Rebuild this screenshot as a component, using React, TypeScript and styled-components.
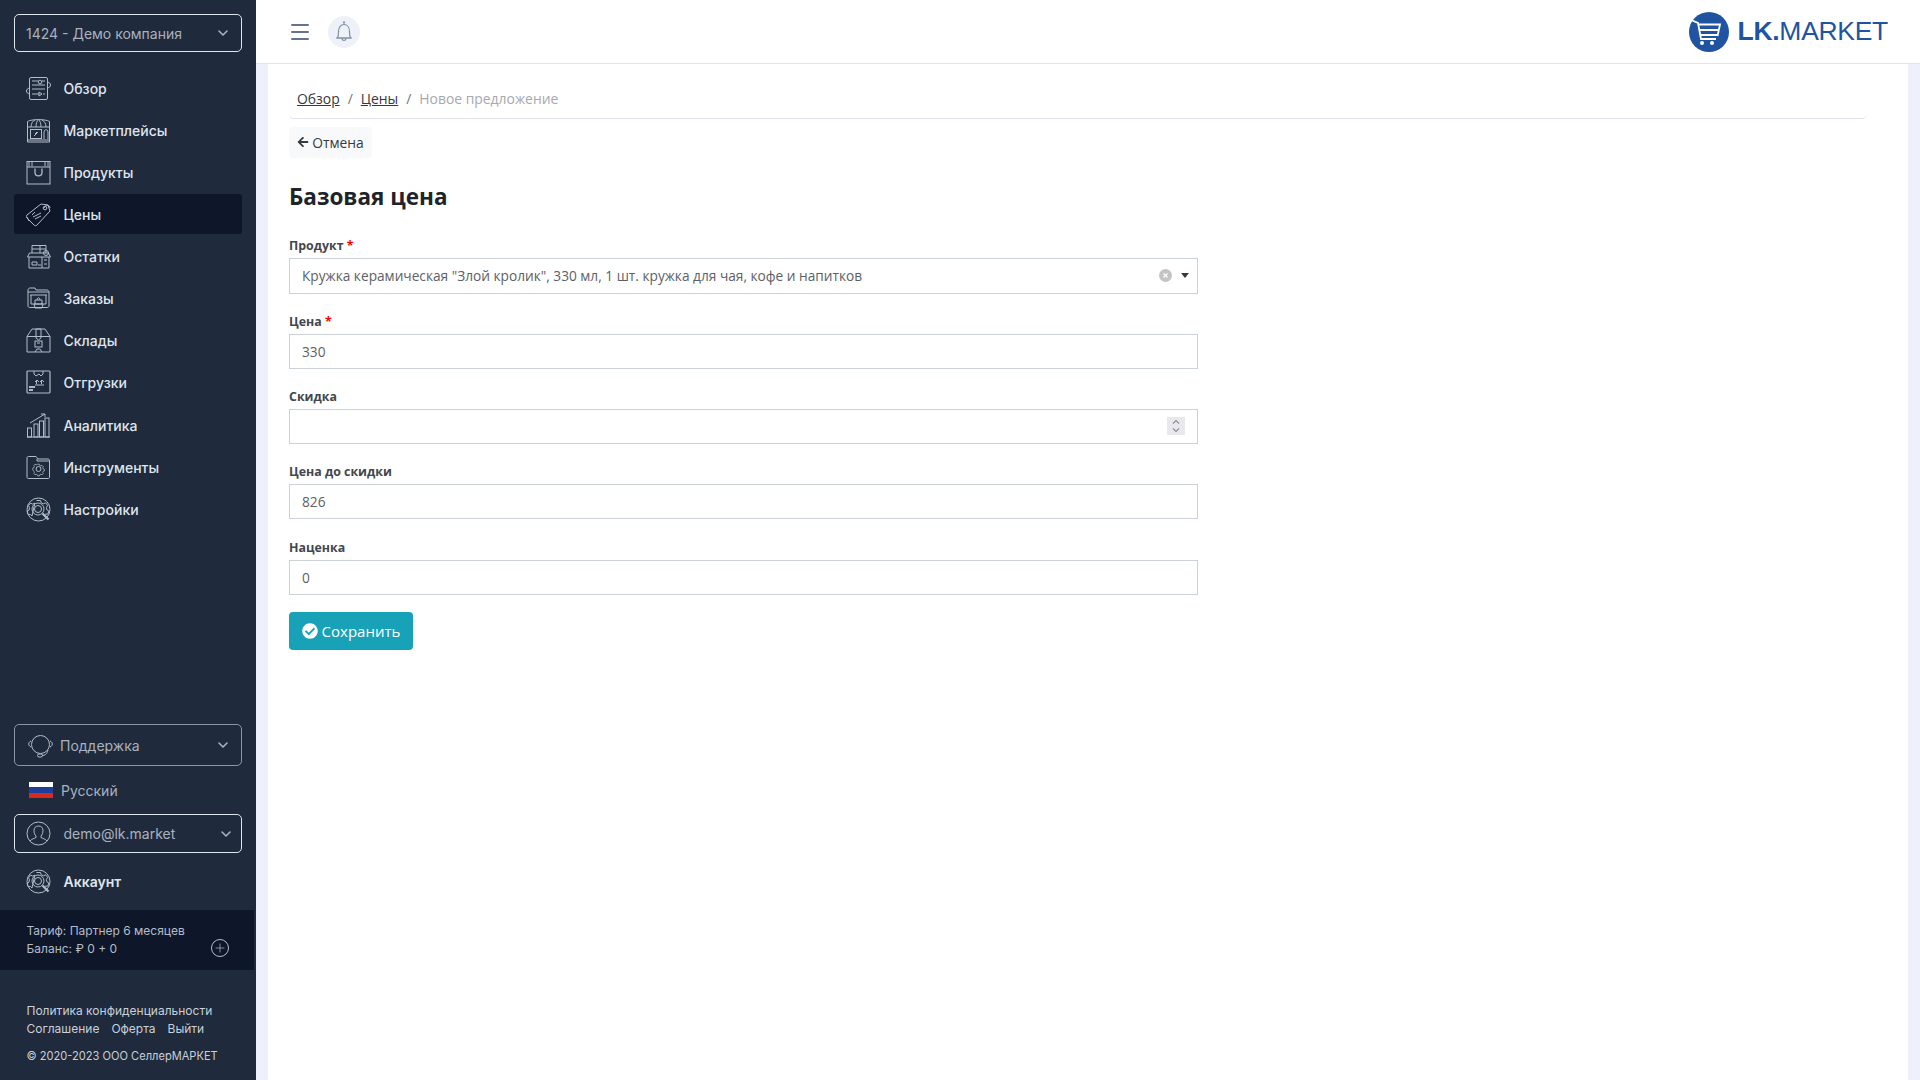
import React from 'react';
import styled, { createGlobalStyle } from 'styled-components';
import { ChevronDown, Menu, Plus } from 'lucide-react';
import { FaCheckCircle, FaArrowLeft } from 'react-icons/fa';

const GlobalStyle = createGlobalStyle`
  html, body { margin: 0; padding: 0; background: #eef1fb; }
  * { box-sizing: border-box; }
`;

const Page = styled.div`
  display: flex;
  width: 1920px;
  height: 1080px;
  overflow: hidden;
  font-family: "Open Sans", "Noto Sans", sans-serif;
`;

// левая колонка
const Sidebar = styled.aside`
  width: 256px;
  flex-shrink: 0;
  display: flex;
  flex-direction: column;
  background: #1f2a3c;
  font-family: Inter, "Liberation Sans", sans-serif;
`;

const SideTop = styled.div`
  padding: 14px 14px 0;
`;

const SideBottom = styled.div`
  margin-top: auto;
`;

const SidePad = styled.div`
  padding: 0 14px;
`;

const DropBox = styled.div<{ $h: number; $dim?: boolean; $pl: number; $pr?: number }>`
  height: ${(p) => p.$h}px;
  display: flex;
  align-items: center;
  padding: 0 ${(p) => p.$pr ?? 10}px 0 ${(p) => p.$pl}px;
  border: 1px solid ${(p) => (p.$dim ? '#8b95a7' : '#dfe5ee')};
  border-radius: 5px;
  color: #a9b2bf;
  font-size: 14px;
  svg.chev { margin-left: auto; color: #a9b2bf; }
`;

const NavList = styled.nav`
  margin-top: 16px;
  display: flex;
  flex-direction: column;
  gap: 2.15px;
`;

const NavItem = styled.a<{ $active?: boolean }>`
  height: 40px;
  display: flex;
  align-items: center;
  gap: 12.5px;
  padding-left: 12px;
  border-radius: 3px;
  background: ${(p) => (p.$active ? '#0e1729' : 'transparent')};
  color: #dfe5ee;
  font-size: 14px;
  font-weight: 500;
`;

const IconSvg = styled.svg`
  width: 25px;
  height: 25px;
  flex-shrink: 0;
  fill: none;
  stroke: #b4bcc9;
  stroke-width: 1;
`;

const DropIcon = styled(IconSvg)<{ $mr: number }>`
  margin-right: ${(p) => p.$mr}px;
`;

const LangRow = styled.div`
  height: 34px;
  margin: 7px 0;
  display: flex;
  align-items: center;
  gap: 8px;
  padding-left: 15px;
  color: #a9b2bf;
  font-size: 14px;
`;

const Flag = styled.span`
  width: 24px;
  height: 16px;
  background: linear-gradient(#fff 0 33%, #1d3f9a 33% 66%, #d52b1e 66%);
`;

const AccountItem = styled(NavItem)`
  margin-top: 8px;
  font-weight: 600;
`;

const TariffBand = styled.div`
  height: 60px;
  width: 254px;
  margin-top: 9px;
  padding: 12px 25px 0 26.5px;
  display: flex;
  justify-content: space-between;
  align-items: flex-start;
  background: #0e1729;
  color: #b4bcc9;
  font-size: 12px;
  line-height: 18px;
`;

const PlusCircle = styled.span`
  width: 18px;
  height: 18px;
  margin-top: 17px;
  display: flex;
  align-items: center;
  justify-content: center;
  border: 1px solid #b4bcc9;
  border-radius: 50%;
`;

const SideFooter = styled.div`
  padding: 32px 0 15px 26.5px;
  color: #c9d0da;
  font-size: 12px;
  line-height: 18px;
`;

const FooterLinks = styled.div`
  display: flex;
  gap: 12px;
`;

const Copyright = styled.div`
  margin-top: 9px;
  font-size: 11.1px;
`;

// правая часть
const MainColumn = styled.div`
  flex: 1;
  display: flex;
  flex-direction: column;
  min-width: 0;
`;

const TopBar = styled.header`
  height: 64px;
  flex-shrink: 0;
  display: flex;
  align-items: center;
  padding: 0 32px;
  background: #fff;
  border-bottom: 1px solid #e2e6f0;
`;

const BurgerBtn = styled.span`
  display: flex;
  color: #64748b;
`;

const BellCircle = styled.span`
  width: 32px;
  height: 32px;
  margin-left: 16px;
  display: flex;
  align-items: center;
  justify-content: center;
  border-radius: 50%;
  background: #eef2f8;
`;

const Logo = styled.div`
  margin-left: auto;
  display: flex;
  align-items: center;
  gap: 9px;
  color: #2154a0;
  font-family: "Liberation Sans", Arial, sans-serif;
  font-size: 26.5px;
  letter-spacing: -0.3px;
  b { font-weight: 700; }
`;

const ContentArea = styled.div`
  flex: 1;
  padding: 0 12px;
  background: #eef1fb;
`;

const Panel = styled.main`
  height: 100%;
  padding: 16px 41px 0 21px;
  background: #fff;
`;

const Breadcrumbs = styled.div`
  height: 39px;
  display: flex;
  align-items: flex-start;
  padding: 9px 0 0 8px;
  border-bottom: 1px solid #dfe2ea;
  border-radius: 0 0 5px 5px;
  font-size: 13.9px;
  line-height: 19px;
  color: #343a40;
`;

const Crumb = styled.a`
  text-decoration: underline;
`;

const CrumbSep = styled.span`
  padding: 0 8px;
  color: #6c757d;
`;

const CrumbCurrent = styled.span`
  color: #a6a9ad;
`;

const CancelBtn = styled.button`
  height: 31px;
  width: 83px;
  margin-top: 8px;
  padding: 0 0 1px;
  display: flex;
  align-items: center;
  justify-content: center;
  gap: 3px;
  border: 0;
  border-radius: 4px;
  background: #f8f9fa;
  color: #343a40;
  font: inherit;
  font-size: 13.8px;
`;

const Title = styled.h1`
  margin: 21.5px 0 23px;
  font-size: 22.5px;
  line-height: 33px;
  font-weight: 700;
  color: #20242a;
`;

const Form = styled.form`
  width: 909px;
`;

const Group = styled.div`
  margin-bottom: 18.33px;
`;

const Label = styled.label`
  display: block;
  margin-bottom: 2px;
  font-size: 12.4px;
  line-height: 20px;
  font-weight: 700;
  color: #43474d;
  i { font-style: normal; color: #f00; }
`;

const fieldCss = `
  width: 100%;
  height: 35px;
  border: 1px solid #ccd1d9;
  background: #fff;
  color: #5c6167;
  font-family: inherit;
  font-size: 13.7px;
  padding: 0 12px;
  outline: none;
`;

const Input = styled.input`
  ${fieldCss}
`;

const NumberWrap = styled.div`
  position: relative;
`;

const Stepper = styled.span`
  position: absolute;
  top: 8px;
  right: 13px;
  width: 18px;
  height: 18px;
  background: #e9e9ed;
`;

const SelectBox = styled.div`
  ${fieldCss}
  height: 36px;
  display: flex;
  align-items: center;
`;

const SelectValue = styled.span`
  flex: 1;
  white-space: nowrap;
`;

const ClearIcon = styled.span`
  width: 13px;
  height: 13px;
  margin-right: 9px;
  display: flex;
  border-radius: 50%;
  background: #c4c4c4;
`;

const Caret = styled.span`
  width: 0;
  height: 0;
  margin-right: -4px;
  border-left: 4px solid transparent;
  border-right: 4px solid transparent;
  border-top: 5px solid #343a40;
`;

const SaveBtn = styled.button`
  height: 38px;
  width: 124px;
  margin-top: -1.5px;
  padding: 0;
  display: flex;
  align-items: center;
  justify-content: center;
  gap: 4px;
  border: 0;
  border-radius: 4px;
  background: #17a2b8;
  color: #fff;
  font: inherit;
  font-size: 15px;
`;

const icons: Record<string, React.ReactNode> = {
  overview: (
    <>
      <rect x="3.5" y="1.5" width="18" height="22" rx="1.5" />
      <path d="M6 5h6M16 5h3M6 9h13M6 13h13M6 18h7M17 18h2" />
      <circle cx="14" cy="6" r="1.8" />
      <path d="M13 16l3 2-3 2z" />
      <path d="M3.5 12c-2 .5-3 1.5-3 3s1 2.5 3 3M21.5 6c2 .5 3 1.5 3 3s-1 2.5-3 3" />
    </>
  ),
  market: (
    <>
      <path d="M1.5 9V3.5C5 1 20 1 23.5 3.5V9" />
      <path d="M1 9h23M5 9c0-4 2-6 4-7M20 9c0-4-2-6-4-7M10 9c0-4 1-6 2.5-7.5 1.5 1.5 2.5 3.5 2.5 7.5" />
      <path d="M1.5 9v15h22V9M1.5 22h22" />
      <rect x="4.5" y="11.5" width="11" height="9" />
      <path d="M18 21v-7c0-3 4-3 4 0v7M8 18l4-4M9 16l2-2" />
    </>
  ),
  products: (
    <>
      <rect x="1" y="1.5" width="23" height="22.5" />
      <path d="M1 7h23M3 1.5v5M6 1.5v5M19 1.5v5M22 1.5v5" />
      <path d="M9 8.5v4c0 4.5 7 4.5 7 0v-4" strokeWidth="1.3" />
    </>
  ),
  prices: (
    <>
      <path d="M15 2l7 1 2 6-13 14c-1 1-2 1-3 0L1 16c-.8-1-.8-2 0-3z" />
      <path d="M3 19l-2-4M9 10l-3 3M7 15l8-4M9 17l6-3" />
      <circle cx="19" cy="6" r="1.8" />
      <path d="M18 6c2-4 6-3 6 0" />
    </>
  ),
  stock: (
    <>
      <path d="M6 9V1.5h14V9M6 5h14M14 1.5V9" />
      <path d="M1.5 13l2-4h19l2 4zM3 13v11h20V13" />
      <path d="M16 13v11M6 18h5v3H6zM12 21h3M18 16h3M18 20h3" />
      <circle cx="20" cy="9" r="2.5" />
    </>
  ),
  orders: (
    <>
      <path d="M2 20V4c0-1 1-2 2-2h5l1 2h11c1 0 2 1 2 2v14c0 1-1 1.5-2 1.5H4c-1 0-2-.5-2-1.5z" />
      <path d="M2 6h21M4 9h17M5 9v9h15V9" />
      <path d="M9 18v-4h7v4M11 14c0-3 3-3 3 0M8 18h9l-1 4H9z" />
    </>
  ),
  warehouse: (
    <>
      <path d="M1 8.5L6 1h13l5 7.5V24H1zM1 8.5h23" />
      <path d="M10 1h5v9l-2.5 2L10 10z" />
      <rect x="9" y="13" width="7" height="6" />
      <path d="M11 15h3M9 24l2-3h3l2 3" />
    </>
  ),
  shipping: (
    <>
      <rect x="1" y="1" width="23" height="22" rx="1" strokeWidth="1.2" />
      <path d="M8 1v3l2 2 3-2 2 2 2-2V1" />
      <path d="M9 12l2-2 2 2M10.5 10v4M14 12l2-2 2 2M15.5 10v4M9 15h9" />
      <path d="M3 17h6M3 20h4" strokeWidth="1.3" stroke="#dfe5ee" />
    </>
  ),
  analytics: (
    <>
      <path d="M1 24h23" />
      <rect x="1.5" y="15" width="4" height="9" />
      <rect x="8" y="11" width="4" height="13" />
      <rect x="13.5" y="8" width="4" height="16" />
      <rect x="19" y="5" width="4" height="19" />
      <path d="M4 10L19 1M15 1h4v3" />
    </>
  ),
  tools: (
    <>
      <path d="M1 22V3c0-1 .5-1.5 1.5-1.5H10l2 2.5h10c1 0 1.5.5 1.5 1.5V22c0 1-.5 1.5-1.5 1.5H2.5C1.5 23.5 1 23 1 22z" />
      <path d="M11 4v2h13" />
      <circle cx="12.5" cy="14" r="2.5" />
      <path d="M11.5 8h2l.5 1.5 1.5.7 1.5-.7 1.5 1.5-.7 1.5.7 1.5 1.5.5v2l-1.5.5-.7 1.5.7 1.5-1.5 1.5-1.5-.7-1.5.7-.5 1.5h-2l-.5-1.5-1.5-.7-1.5.7-1.5-1.5.7-1.5-.7-1.5L5 15v-2l1.5-.5.7-1.5-.7-1.5L8 8l1.5.7 1.5-.7z" transform="translate(2.8 3) scale(.78)" />
    </>
  ),
  settings: (
    <>
      <circle cx="12.5" cy="12.5" r="11.5" />
      <path d="M10.5 3.5h4l.7 2.3 2.2 1 2.2-1 2 2.5-1.2 2.2.5 2.3 2 1.2-1 3-2.5.2-1.5 1.8M6 19l-1.5-1.5-2.5-.2-1-3 2-1.2.5-2.3L2.5 8.6l2-2.5 2.2 1 2.2-1z" />
      <circle cx="12" cy="12" r="6" />
      <circle cx="12" cy="12" r="3.5" />
      <path d="M16.5 16.5l6 6" strokeWidth="2.2" />
    </>
  ),
  support: (
    <>
      <circle cx="12.5" cy="11.5" r="9" />
      <path d="M3 14c-3-1-3-5 0-6M22 14c3-1 3-5 0-6" />
      <path d="M20 17c-1 4-3 5.5-6 5.5" />
      <rect x="9.5" y="21" width="5" height="3" rx="1.5" />
    </>
  ),
  user: (
    <>
      <circle cx="12.5" cy="12.5" r="11.5" />
      <path d="M12.5 5c-3 0-4.5 2-4.5 4.5 0 2.5 1 4.5 2 5.5v1.5c-2 1.2-4.5 1.5-6 3.5M12.5 5c3 0 4.5 2 4.5 4.5 0 2.5-1 4.5-2 5.5v1.5c2 1.2 4.5 1.5 6 3.5" />
    </>
  ),
};

const Icon = ({ name }: { name: string }) => <IconSvg viewBox="0 0 25 25">{icons[name]}</IconSvg>;

const NAV_ITEMS = [
  { key: 'overview', label: 'Обзор' },
  { key: 'market', label: 'Маркетплейсы' },
  { key: 'products', label: 'Продукты' },
  { key: 'prices', label: 'Цены', active: true },
  { key: 'stock', label: 'Остатки' },
  { key: 'orders', label: 'Заказы' },
  { key: 'warehouse', label: 'Склады' },
  { key: 'shipping', label: 'Отгрузки' },
  { key: 'analytics', label: 'Аналитика' },
  { key: 'tools', label: 'Инструменты' },
  { key: 'settings', label: 'Настройки' },
];

const LogoMark = () => (
  <svg width="40" height="40" viewBox="0 0 40 40">
    <circle cx="20" cy="20" r="20" fill="#2154a0" />
    <path d="M2 8l7 3 3 16h15" fill="none" stroke="#fff" strokeWidth="1.8" />
    <path d="M9.5 12.5H31l-2.5 11.5M11 18h18.5M12 23h16" fill="none" stroke="#fff" strokeWidth="1.8" />
    <circle cx="13" cy="31" r="2" fill="#fff" />
    <circle cx="23" cy="31" r="2" fill="#fff" />
  </svg>
);

const BellIcon = () => (
  <svg width="20" height="24" viewBox="0 0 20 24" fill="none" stroke="#8291a8" strokeWidth="1.2">
    <path d="M10 2v2.5M8.8 2h2.4" />
    <path d="M3.5 18c1-2 1-3.5 1-6.5C4.5 7 7 4.5 10 4.5s5.5 2.5 5.5 7c0 3 0 4.5 1 6.5z" />
    <path d="M2 18h16M8 18.5c0 2.5 4 2.5 4 0" />
  </svg>
);

const App: React.FC = () => {
  return (
    <Page>
      <GlobalStyle />
      <Sidebar>
        <SideTop>
          <DropBox $h={38} $pl={11}>
            1424 - Демо компания
            <ChevronDown className="chev" size={16} strokeWidth={2.4} />
          </DropBox>
          <NavList>
            {NAV_ITEMS.map((item) => (
              <NavItem key={item.key} $active={item.active}>
                <Icon name={item.key} />
                {item.label}
              </NavItem>
            ))}
          </NavList>
        </SideTop>
        <SideBottom>
          <SidePad>
            <DropBox $h={42} $dim $pl={13}>
              <DropIcon viewBox="0 0 25 25" $mr={7}>{icons.support}</DropIcon>
              Поддержка
              <ChevronDown className="chev" size={16} strokeWidth={2.4} />
            </DropBox>
            <LangRow>
              <Flag />
              Русский
            </LangRow>
            <DropBox $h={39} $pl={11} $pr={7}>
              <DropIcon viewBox="0 0 25 25" $mr={12.5}>{icons.user}</DropIcon>
              demo@lk.market
              <ChevronDown className="chev" size={16} strokeWidth={2.4} />
            </DropBox>
            <AccountItem>
              <Icon name="settings" />
              Аккаунт
            </AccountItem>
          </SidePad>
          <TariffBand>
            <div>
              Тариф: Партнер 6 месяцев
              <br />
              Баланс: ₽ 0 + 0
            </div>
            <PlusCircle>
              <Plus size={14} strokeWidth={1.2} color="#b4bcc9" />
            </PlusCircle>
          </TariffBand>
          <SideFooter>
            <div>Политика конфиденциальности</div>
            <FooterLinks>
              <span>Соглашение</span>
              <span>Оферта</span>
              <span>Выйти</span>
            </FooterLinks>
            <Copyright>© 2020-2023 ООО СеллерМАРКЕТ</Copyright>
          </SideFooter>
        </SideBottom>
      </Sidebar>

      <MainColumn>
        <TopBar>
          <BurgerBtn>
            <Menu size={24} strokeWidth={2} />
          </BurgerBtn>
          <BellCircle>
            <BellIcon />
          </BellCircle>
          <Logo>
            <LogoMark />
            <span>
              <b>LK.</b>MARKET
            </span>
          </Logo>
        </TopBar>
        <ContentArea>
          <Panel>
            <Breadcrumbs>
              <Crumb>Обзор</Crumb>
              <CrumbSep>/</CrumbSep>
              <Crumb>Цены</Crumb>
              <CrumbSep>/</CrumbSep>
              <CrumbCurrent>Новое предложение</CrumbCurrent>
            </Breadcrumbs>
            <CancelBtn type="button">
              <FaArrowLeft size={12} />
              Отмена
            </CancelBtn>
            <Title>Базовая цена</Title>
            <Form>
              <Group>
                <Label>Продукт <i>*</i></Label>
                <SelectBox>
                  <SelectValue>Кружка керамическая "Злой кролик", 330 мл, 1 шт. кружка для чая, кофе и напитков</SelectValue>
                  <ClearIcon>
                    <svg viewBox="0 0 13 13" width="13" height="13">
                      <path d="M4.5 4.5l4 4M8.5 4.5l-4 4" stroke="#fff" strokeWidth="1.2" />
                    </svg>
                  </ClearIcon>
                  <Caret />
                </SelectBox>
              </Group>
              <Group>
                <Label>Цена <i>*</i></Label>
                <Input readOnly value="330" />
              </Group>
              <Group>
                <Label>Скидка</Label>
                <NumberWrap>
                  <Input readOnly value="" />
                  <Stepper>
                    <svg viewBox="0 0 18 18" width="18" height="18" fill="none" stroke="#8f8f9d" strokeWidth="1.2">
                      <path d="M6 6.5l3-3 3 3M6 11.5l3 3 3-3" />
                    </svg>
                  </Stepper>
                </NumberWrap>
              </Group>
              <Group>
                <Label>Цена до скидки</Label>
                <Input readOnly value="826" />
              </Group>
              <Group>
                <Label>Наценка</Label>
                <Input readOnly value="0" />
              </Group>
              <SaveBtn type="button">
                <FaCheckCircle size={16} />
                Сохранить
              </SaveBtn>
            </Form>
          </Panel>
        </ContentArea>
      </MainColumn>
    </Page>
  );
};

export default App;
